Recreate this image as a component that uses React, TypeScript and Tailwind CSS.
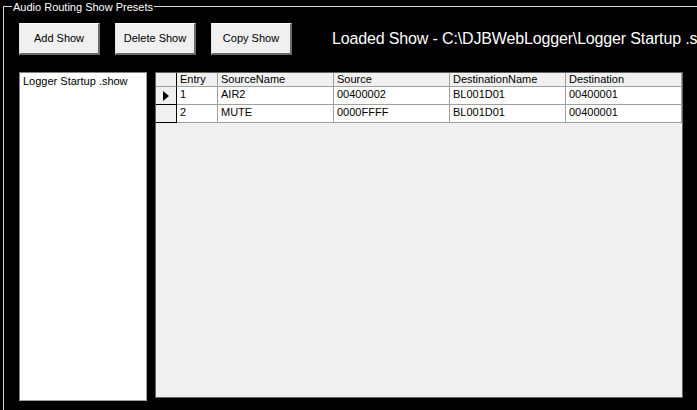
const rows = [
  { entry: '1', sourceName: 'AIR2', source: '00400002', destName: 'BL001D01', dest: '00400001', current: true },
  { entry: '2', sourceName: 'MUTE', source: '0000FFFF', destName: 'BL001D01', dest: '00400001', current: false },
];

const columns = [
  { label: 'Entry', width: 'w-[41px]' },
  { label: 'SourceName', width: 'w-[116px]' },
  { label: 'Source', width: 'w-[116px]' },
  { label: 'DestinationName', width: 'w-[116px]' },
  { label: 'Destination', width: 'w-[116px]' },
];

function WinButton({ label }: { label: string }) {
  return (
    <button className="w-[81px] h-[32px] bg-[#f0f0f0] text-black text-[11px] border-t border-l border-t-white border-l-[#e3e3e3] border-r-2 border-b-2 border-r-[#696969] border-b-[#696969]">
      {label}
    </button>
  );
}

export default function App() {
  return (
    <div
      className="w-[697px] h-[410px] bg-black overflow-hidden relative"
      style={{ fontFamily: '"Liberation Sans", Arial, sans-serif' }}
    >
      <div className="absolute left-[12px] top-0 bg-black px-px text-white text-[11px] leading-[14px] z-10">
        Audio Routing Show Presets
      </div>
      <div className="ml-[3px] mt-[6px] w-[740px] h-[440px] border-l border-t border-[#d8d8d8] pl-[15px] pt-[16px]">
        <div className="flex items-center h-[32px]">
          <div className="flex gap-[15px]">
            <WinButton label="Add Show" />
            <WinButton label="Delete Show" />
            <WinButton label="Copy Show" />
          </div>
          <div className="ml-[40px] text-white text-[16px] tracking-[-0.15px] whitespace-nowrap">
            Loaded Show - C:\DJBWebLogger\Logger Startup .show
          </div>
        </div>

        <div className="flex gap-[8px] mt-[17px]">
          <div className="w-[128px] h-[329px] bg-white border border-t-[#808080] border-l-[#808080] border-r-[#a0a0a0] border-b-[#a0a0a0] px-[3px] pt-[1px]">
            <div className="text-[11px] leading-[14px] text-black">Logger Startup .show</div>
          </div>

          <div className="w-[528px] h-[326px] bg-[#f0f0f0] border border-[#646464]">
            <div className="flex h-[14px] bg-[#f0f0f0] text-[11px] leading-[13px] text-black">
              <div className="w-[21px] border-r border-black border-b border-b-[#a0a0a0]" />
              {columns.map((c) => (
                <div key={c.label} className={`${c.width} border-r border-b border-[#a0a0a0] px-[3px] whitespace-nowrap`}>
                  {c.label}
                </div>
              ))}
            </div>
            {rows.map((r) => (
              <div key={r.entry} className="flex h-[18px] text-[11px] leading-[15px] text-black">
                <div className="w-[21px] bg-[#f0f0f0] border-r border-black border-b border-b-black flex items-center justify-center">
                  {r.current && (
                    <svg width="6" height="10" viewBox="0 0 6 10">
                      <path d="M0 0 L6 5 L0 10 Z" fill="black" />
                    </svg>
                  )}
                </div>
                {[r.entry, r.sourceName, r.source, r.destName, r.dest].map((v, i) => (
                  <div
                    key={i}
                    className={`${columns[i].width} bg-white border-r border-b border-[#a0a0a0] px-[3px] whitespace-nowrap`}
                  >
                    {v}
                  </div>
                ))}
              </div>
            ))}
          </div>
        </div>
      </div>
    </div>
  );
}
